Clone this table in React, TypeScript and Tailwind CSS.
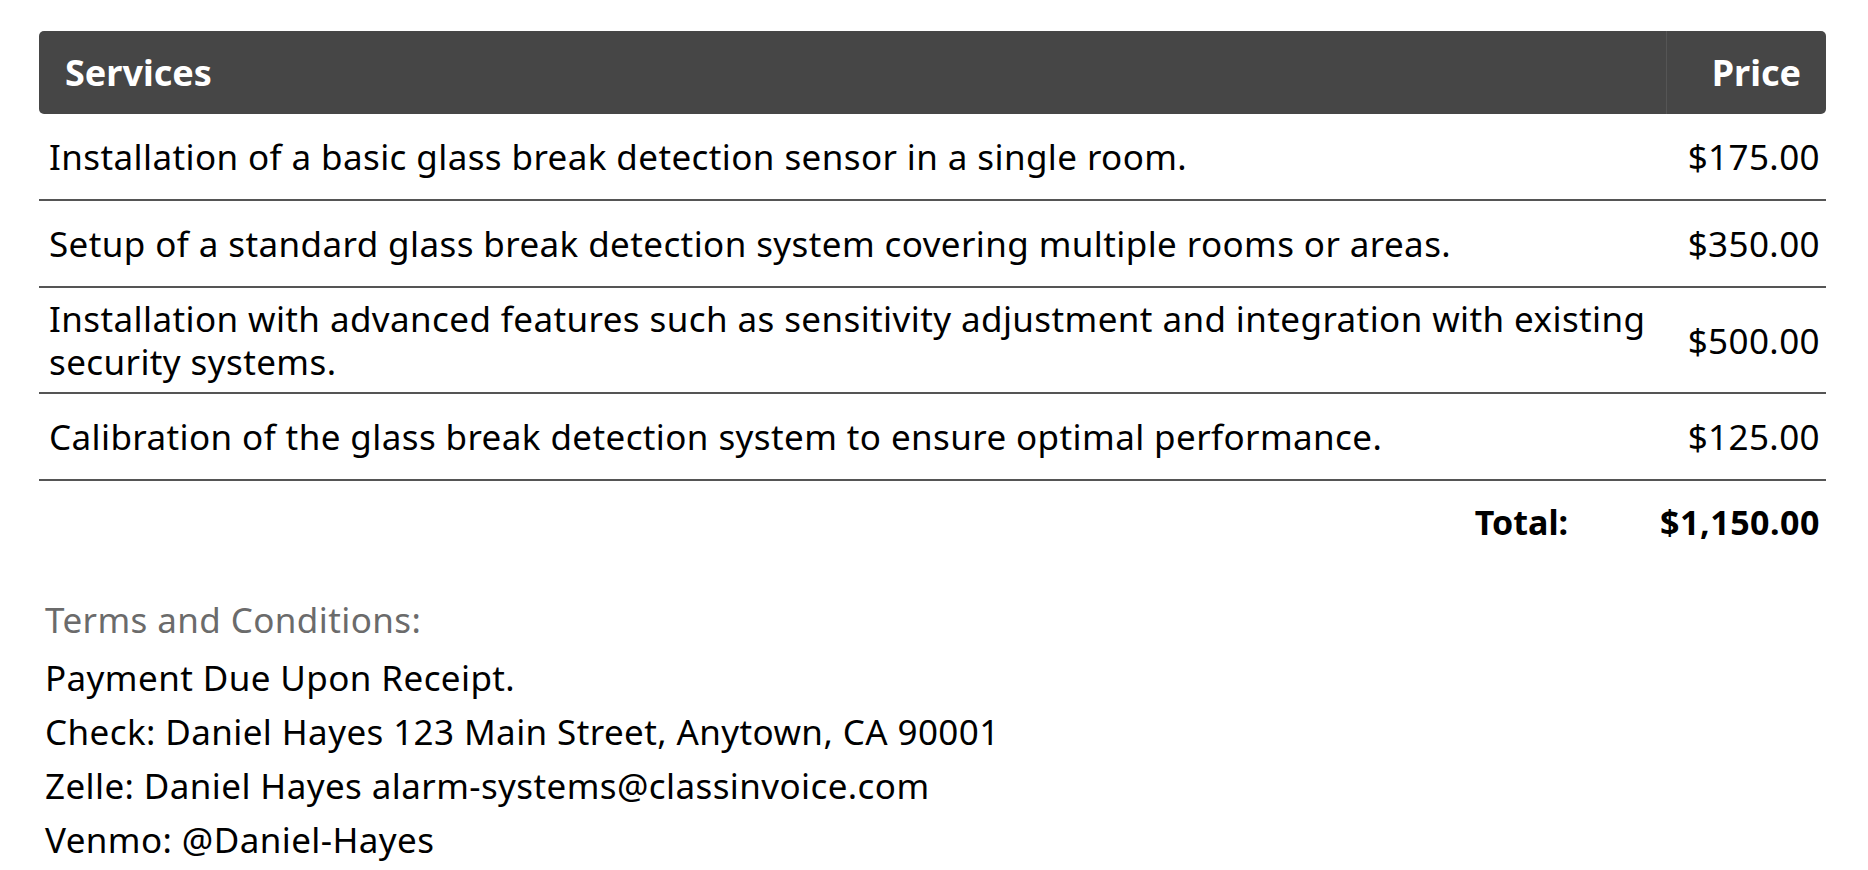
const services = [
  {
    desc: "Installation of a basic glass break detection sensor in a single room.",
    price: "$175.00",
  },
  {
    desc: "Setup of a standard glass break detection system covering multiple rooms or areas.",
    price: "$350.00",
  },
  {
    desc: "Installation with advanced features such as sensitivity adjustment and integration with existing security systems.",
    price: "$500.00",
  },
  {
    desc: "Calibration of the glass break detection system to ensure optimal performance.",
    price: "$125.00",
  },
];

const terms = [
  "Payment Due Upon Receipt.",
  "Check: Daniel Hayes 123 Main Street, Anytown, CA 90001",
  "Zelle: Daniel Hayes alarm-systems@classinvoice.com",
  "Venmo: @Daniel-Hayes",
];

export default function App() {
  return (
    <div className="min-h-screen bg-white pt-[31px] pl-[39px] pr-[42px] font-['Noto_Sans',sans-serif] text-black">
      {/* Table header */}
      <div className="flex h-[83px] rounded-[5px] bg-[#464646] text-[36px] font-bold text-white">
        <div className="flex flex-1 items-center pl-[26px]">Services</div>
        <div className="flex w-[160px] items-center justify-end border-l border-[#555555] pr-[25px]">
          Price
        </div>
      </div>

      {/* Rows */}
      {services.map((s) => (
        <div
          key={s.price}
          className="flex min-h-[87px] items-center border-b-2 border-[#555555] py-[9px] text-[35px] leading-[43px] tracking-[0.4px]"
        >
          <div className="flex-1 pl-[10px]">{s.desc}</div>
          <div className="w-[160px] pr-[6px] text-right">{s.price}</div>
        </div>
      ))}

      {/* Total */}
      <div className="flex h-[82px] items-center justify-end gap-[92px] pr-[6px] text-[34px] font-bold">
        <span>Total:</span>
        <span className="tracking-[0.5px]">$1,150.00</span>
      </div>

      {/* Terms */}
      <div className="mt-[30px] pl-[6px] text-[35px] tracking-[0.4px]">
        <div className="mb-[4px] leading-[54px] text-[#6b6b6b]">Terms and Conditions:</div>
        {terms.map((t) => (
          <div key={t} className="leading-[54px]">
            {t}
          </div>
        ))}
      </div>
    </div>
  );
}
